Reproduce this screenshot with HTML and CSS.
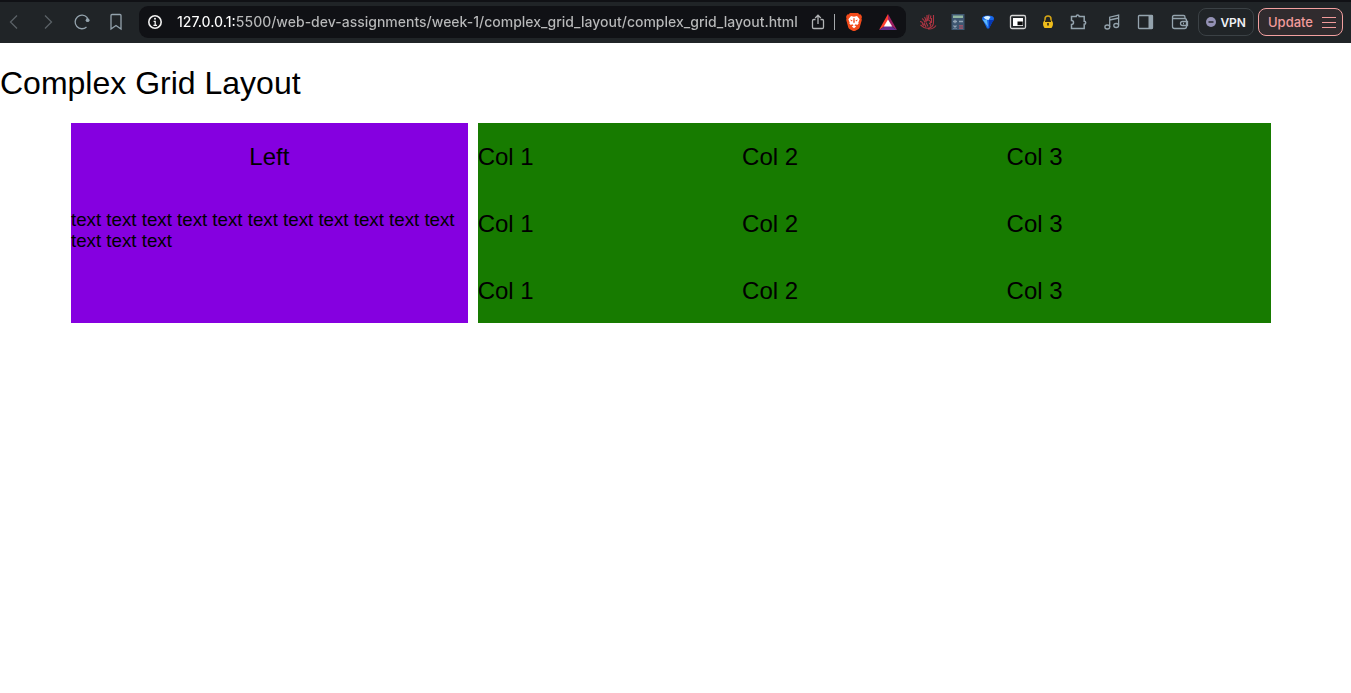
FILE: index.html
```html
<!DOCTYPE html>
<html lang="en">
<head>
<meta charset="utf-8">
<meta name="viewport" content="width=device-width, initial-scale=1">
<title>Complex Grid Layout</title>
<link rel="stylesheet" href="styles.css">
</head>
<body>
<header class="toolbar">
  <nav class="nav-buttons" aria-label="Navigation">
    <button class="icon-btn dim" aria-label="Back"><svg width="20" height="20" viewBox="0 0 20 20"><path d="M13 3.500 6.500 10 13 16.500"/></svg></button>
    <button class="icon-btn dim" aria-label="Forward"><svg width="20" height="20" viewBox="0 0 20 20"><path d="M7 3.500 13.500 10 7 16.500"/></svg></button>
    <button class="icon-btn" aria-label="Reload"><svg width="20" height="20" viewBox="0 0 20 20"><path d="M14.500 15A6.800 6.800 0 1 1 15 5.400L15.800 8"/><circle cx="15.600" cy="8.200" r="1.900" fill="currentColor" stroke="none"/></svg></button>
    <button class="icon-btn" aria-label="Bookmark"><svg width="20" height="20" viewBox="0 0 20 20"><path d="M5 3.500q0-1 1-1h8q1 0 1 1V17L10 13.500 5 17z"/></svg></button>
  </nav>
  <div class="address">
    <button class="icon-btn light" aria-label="Site information"><svg width="18" height="18" viewBox="0 0 18 18"><circle cx="9" cy="9" r="6.200"/><path d="M7.600 8.300h1.600v4M7.400 12.300h3.600" stroke-width="1.300"/><circle cx="9" cy="5.800" r="1" fill="currentColor" stroke="none"/></svg></button>
    <input class="url" type="text" aria-label="Address" value="127.0.0.1:5500/web-dev-assignments/week-1/complex_grid_layout/complex_grid_layout.html">
    <button class="icon-btn share" aria-label="Share"><svg width="18" height="18" viewBox="0 0 18 18"><path d="M6.500 6.500H4.800q-1.300 0-1.300 1.300v6.400q0 1.300 1.300 1.300h8.400q1.300 0 1.300-1.300V7.800q0-1.300-1.300-1.300h-1.700M9 11V2.500M6.200 5 9 2.200 11.800 5"/></svg></button>
    <span class="divider"></span>
    <button class="icon-btn brave" aria-label="Brave Shields"><svg width="18" height="18" viewBox="0 0 18 18"><path fill="#f24b1b" stroke="none" d="M5 0h8l1.600 1.600 1.300-.2L17 4l-.5 1.200.3 1.800-2.100 7.600q-.4 1-1.500 1.700L9 18.500l-4.200-2.200q-1.100-.7-1.500-1.700L1.200 7l.3-1.800L1 4l1.100-2.600 1.300.2z"/><path fill="#fff" stroke="none" d="M6 3.100 9 3.700l3-.6 2.600 3.100-1.300 3.600.4.800-1.500 1.500-1.400-.8L9 12.400l-1.800-1.100-1.400.8-1.500-1.500.4-.8-1.300-3.600z"/><path fill="#f24b1b" stroke="none" d="m4.800 6.500 2.700.7-.7 1.300zM13.200 6.500l-2.700.7.700 1.300zM8.500 5h1l.3 4.200L9 10.300l-.8-1.100z"/><path fill="#fff" stroke="none" d="m6.800 13.400 2.200-1.300 2.200 1.300L9 15.200z"/></svg></button>
    <button class="icon-btn rewards" aria-label="Brave Rewards"><svg width="20" height="20" viewBox="0 0 20 20"><g stroke="none"><path fill="#ff4030" d="M10 2 1 18l6-4 3-5z"/><path fill="#9e1f63" d="m10 2 9 16-6-4-3-5z"/><path fill="#662d91" d="M1 18h18l-6-4H7z"/><path fill="#fff" d="m10 7.500 4.200 7H5.800z"/></g></svg></button>
  </div>
  <div class="extensions">
    <button class="icon-btn" aria-label="Red extension"><svg width="18" height="18" viewBox="0 0 18 18"><path stroke="#b03543" stroke-width="1.100" d="M1 8.500q2 0 3 2M3 5.500q2 1 3 4M5.500 4q1.500 2 1.500 5M8 2v6M10 1.500l-1 5M12 2.500 11 6M14.500 2v7q0 4-3 5.500t-6.500 0L1.500 12M7.500 8q2-2 3.500 0t-1 2.500q3 0 1 3M12.500 5v5M5 10l2 4M3 10.500l2 2M9 16q5 .5 8-3.500M7 9.500l2 4"/></svg></button>
    <button class="icon-btn" aria-label="Calculator"><svg width="18" height="18" viewBox="0 0 18 18"><path fill="#3e5670" stroke="none" d="M2.500 1h13v16h-13z"/><path fill="#91b7a1" stroke="none" d="M4 2.500h10v2.500H4z"/><path stroke="#93a4b5" d="M4 8.500h4M6 6.700v3.600M10 8.500h4M4.500 12.500l3 3m0-3-3 3"/><path stroke="#b45468" d="M10 12.900h4M10 15.100h4"/></svg></button>
    <button class="icon-btn" aria-label="Gem"><svg width="18" height="18" viewBox="0 0 18 18"><g stroke="none"><path fill="#1766e8" d="M3 5.500q0-3 6-3t6 3q0 1.500-1.500 3L10 15.500H8L4.500 8.500Q3 7 3 5.500z"/><path fill="#0739b5" d="M10 7h5q-.5 1-1.500 2L10 15.500z"/><path fill="#5eb7fa" d="M3.500 6.500 8 7l1 7z"/><path fill="#d9f2ff" d="M4.500 4.500q4-2.500 7-.5L9.500 7 7 6.500z"/></g></svg></button>
    <button class="icon-btn" aria-label="Picture in picture"><svg width="18" height="18" viewBox="0 0 18 18"><rect x="1.500" y="2.500" width="15" height="13" rx="1.500" stroke="#d5d5d5"/><path fill="#fff" stroke="none" d="M4 5h10v8H4z"/><path fill="#090909" stroke="none" d="M8.500 8.500h5.200v3.700H8.500z"/></svg></button>
    <button class="icon-btn" aria-label="Password lock"><svg width="18" height="18" viewBox="0 0 18 18"><path stroke="#d5a515" stroke-width="1.500" d="M6 8V6q0-3 3-3t3 3v2"/><path fill="#efbd1b" stroke="none" d="M5 8h8q1 1 1 3t-1.500 4h-7Q4 13 4 11t1-3z"/><path stroke="#342a12" stroke-width="1.600" d="M9 10v2.500M6 8.200h6"/></svg></button>
    <button class="icon-btn" aria-label="Extensions"><svg width="18" height="18" viewBox="0 0 18 18"><path stroke-width="1.500" d="M2.500 3.500h4.700a1.500 1.500 0 0 1 3 0h5v4.700a1.500 1.500 0 0 1 0 3v4.300H2.500v-4q2 0 2-2t-2-2z"/></svg></button>
    <div class="browser-tools">
      <button class="icon-btn" aria-label="Media"><svg width="18" height="18" viewBox="0 0 18 18"><path d="M6.700 14V4.200L15.600 2v10.200M6.700 7l8.900-2"/><ellipse cx="4.300" cy="14" rx="2.400" ry="2"/><ellipse cx="13.200" cy="12.500" rx="2.400" ry="2"/></svg></button>
      <button class="icon-btn" aria-label="Sidebar"><svg width="18" height="18" viewBox="0 0 18 18"><rect x="1.500" y="2.500" width="14" height="13" rx=".8"/><path fill="currentColor" stroke="none" d="M11.500 2.500H16v13h-4.500z"/></svg></button>
      <button class="icon-btn" aria-label="Wallet"><svg width="18" height="18" viewBox="0 0 18 18"><path d="M1.500 4v9.500q0 2 2 2h10q2 0 2-2v-6q0-2-2-2H3q-1.500 0-1.500-1.500T3 2.500h9.500q1.500 0 1.500 1.500v1.500M16.500 8.500h-5q-2 0-2 2t2 2h5zM12 10.500h1"/></svg></button>
    </div>
  </div>
  <div class="actions">
    <button class="pill vpn"><svg width="10" height="10" viewBox="0 0 10 10" aria-hidden="true"><circle cx="5" cy="5" r="5" fill="#9492b5"/><path d="M2.500 5h5" stroke="#26272e" stroke-width="1.500"/></svg>VPN</button>
    <button class="pill update">Update<svg width="14" height="14" viewBox="0 0 14 14" aria-hidden="true"><path d="M0 2.500h14M0 7.500h14M0 12.500h14" stroke="currentColor"/></svg></button>
  </div>
</header>
<main class="page">
  <h1>Complex Grid Layout</h1>
  <div class="layout">
    <section class="left">
      <h2>Left</h2>
      <h3>text text text text text text text text text text text text text text</h3>
    </section>
    <section class="columns">
      <h2>Col 1</h2><h2>Col 2</h2><h2>Col 3</h2>
      <h2>Col 1</h2><h2>Col 2</h2><h2>Col 3</h2>
      <h2>Col 1</h2><h2>Col 2</h2><h2>Col 3</h2>
    </section>
  </div>
</main>
</body>
</html>
```
FILE: styles.css
```css
* {
  box-sizing: border-box;
}

body {
  margin: 0;
  background: #fff;
  color: #000;
  font-family: "Liberation Sans", Arial, sans-serif;
}

.toolbar {
  display: flex;
  align-items: center;
  padding: 4px 8px 5px 4px;
  border-top: 2px solid #101115;
  background: #202427;
  font-family: Inter, sans-serif;
}

.nav-buttons {
  display: flex;
  gap: 14px;
  margin-right: 13px;
}

.icon-btn {
  flex: none;
  display: block;
  padding: 0;
  border: 0;
  background: none;
  color: #94a3ad;
}

.icon-btn svg {
  display: block;
  fill: none;
  stroke: currentColor;
  stroke-width: 1.3;
}

.icon-btn.dim {
  color: #5a6166;
}

.icon-btn.light {
  color: #f0f0f0;
}

.icon-btn.light svg {
  stroke-width: 1.6;
}

.address {
  flex: 1;
  min-width: 0;
  display: flex;
  align-items: center;
  height: 32px;
  padding: 0 8px 0 7px;
  border-radius: 9px;
  background: #101115;
}

.url {
  flex: 1;
  min-width: 0;
  margin: 0 10px 0 13px;
  padding: 0;
  border: 0;
  outline: 0;
  background: linear-gradient(90deg, #fff 60px, #b9babb 60px);
  background-clip: text;
  -webkit-background-clip: text;
  color: transparent;
  font: 500 14px/20px Inter, sans-serif;
}

.icon-btn.share {
  color: #b1b3b5;
}

.divider {
  width: 1px;
  height: 16px;
  margin: 0 10px 0 7px;
  background: #a5a8ab;
}

.rewards {
  margin-left: 15px;
}

.extensions {
  display: flex;
  gap: 12px;
  margin: 0 9px 0 13px;
}

.browser-tools {
  display: flex;
  gap: 16px;
  margin-left: 4px;
}

.actions {
  display: flex;
  gap: 4px;
}

.pill {
  display: flex;
  align-items: center;
  height: 28px;
  border-radius: 8px;
  font-family: Inter, sans-serif;
}

.vpn {
  gap: 4px;
  padding: 0 7px;
  border: 1px solid #3b4145;
  background: #202427;
  color: #f0f0f4;
  font-size: 12px;
  font-weight: 600;
}

.update {
  gap: 9px;
  padding: 0 6px 0 9px;
  border: 1px solid #f2a0a0;
  background: #302b2e;
  color: #f29b9b;
  font-size: 13px;
  font-weight: 500;
}

.page {
  padding-right: 9px;
}

h1,
h2,
h3 {
  font-weight: 400;
}

h1 {
  margin: 22px 0 21px;
  line-height: 37px;
}

h2 {
  line-height: 27px;
}

h3 {
  line-height: 21px;
}

.layout {
  display: grid;
  grid-template-columns: 1fr 2fr;
  gap: 10px;
  max-width: 1200px;
  margin: 0 auto;
}

.left {
  display: grid;
  align-content: start;
  background: #8500e0;
}

.left h2 {
  text-align: center;
}

.columns {
  display: grid;
  grid-template-columns: repeat(3, 1fr);
  background: #177b00;
}
```
